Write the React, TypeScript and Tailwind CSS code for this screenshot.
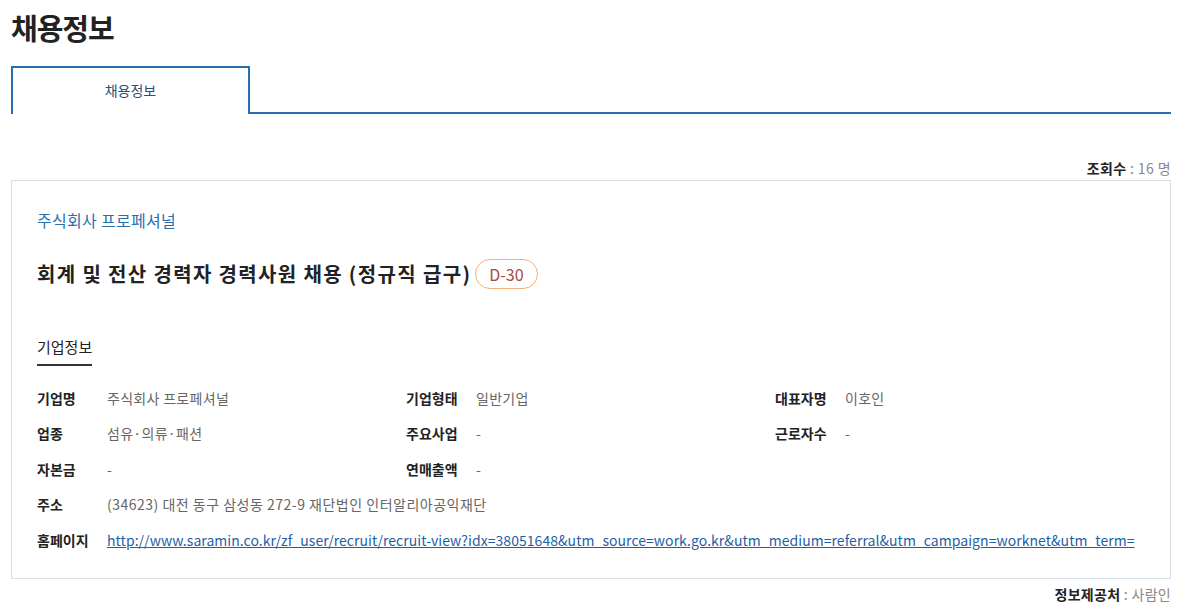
import React from 'react';

const font = { fontFamily: '"Noto Sans CJK KR", "Noto Sans", sans-serif' };

const rows: { label: string; value: string }[][] = [
  [
    { label: '기업명', value: '주식회사 프로페셔널' },
    { label: '기업형태', value: '일반기업' },
    { label: '대표자명', value: '이호인' }
  ],
  [
    { label: '업종', value: '섬유·의류·패션' },
    { label: '주요사업', value: '-' },
    { label: '근로자수', value: '-' }
  ],
  [
    { label: '자본금', value: '-' },
    { label: '연매출액', value: '-' }
  ]
];

const InfoItem = ({ label, value }: { label: string; value: string }) => (
  <div className="flex items-center w-[369px]">
    <span className="w-[70px] shrink-0 font-bold text-[14px] text-[#222]">{label}</span>
    <span className="text-[14px] text-[#666] tracking-[0.3px]">{value}</span>
  </div>
);

export default function App() {
  return (
    <div className="w-[1187px] h-[611px] bg-white px-[11px] pr-[16px] overflow-hidden" style={font}>
      {/* Page title */}
      <h1 className="pt-[6px] text-[29px] leading-[42px] font-bold text-[#222] tracking-[-1px]">채용정보</h1>

      {/* Tabs */}
      <div className="flex mt-[18px] h-[48px]">
        <div className="w-[239px] border-2 border-b-0 border-[#2a6fad] flex items-center justify-center text-[14px] text-[#2a4f77] pb-[2px]">
          채용정보
        </div>
        <div className="flex-1 border-b-2 border-[#2a6fad]" />
      </div>

      {/* View count */}
      <div className="mt-[44px] text-right text-[14px] leading-[20px] text-[#888] tracking-[0.4px]">
        <span className="font-bold text-[#222]">조회수</span> : 16 명
      </div>

      {/* Card */}
      <div className="mt-[2px] border border-[#d6e0e9] h-[399px] px-[25px] pt-[28px]">
        <div className="text-[16px] leading-[22px] text-[#2a6fad] tracking-[0.3px]">주식회사 프로페셔널</div>

        <div className="flex items-center mt-[28px]">
          <h2 className="text-[20px] leading-[30px] font-bold text-[#222] tracking-[1.35px]">
            회계 및 전산 경력자 경력사원 채용 (정규직 급구)
          </h2>
          <span className="ml-[4px] h-[30px] px-[13px] rounded-full border border-[#f8ad74] text-[16px] leading-[28px] text-[#a54d45]">
            D-30
          </span>
        </div>

        <div className="mt-[47px] inline-block border-b-2 border-[#333] pb-[6px] text-[15px] leading-[22px] text-[#222]">
          기업정보
        </div>

        <div className="mt-[22px] flex flex-col gap-[15.5px]">
          {rows.map((row, i) => (
            <div key={i} className="flex h-[20px]">
              {row.map((item) => (
                <InfoItem key={item.label} {...item} />
              ))}
            </div>
          ))}
          <div className="flex items-center h-[20px]">
            <span className="w-[70px] shrink-0 font-bold text-[14px] text-[#222]">주소</span>
            <span className="text-[14px] text-[#666] tracking-[0.5px]">(34623) 대전 동구 삼성동 272-9 재단법인 인터알리아공익재단</span>
          </div>
          <div className="flex items-center h-[20px]">
            <span className="w-[70px] shrink-0 font-bold text-[14px] text-[#222]">홈페이지</span>
            <a href="#" className="text-[14px] text-[#1f5fa6] underline whitespace-nowrap tracking-[0.05px]">
              http://www.saramin.co.kr/zf_user/recruit/recruit-view?idx=38051648&utm_source=work.go.kr&utm_medium=referral&utm_campaign=worknet&utm_term=
            </a>
          </div>
        </div>
      </div>

      {/* Source */}
      <div className="mt-[5px] text-right text-[14px] leading-[20px] text-[#888] tracking-[0.3px]">
        <span className="font-bold text-[#222]">정보제공처</span> : 사람인
      </div>
    </div>
  );
}
